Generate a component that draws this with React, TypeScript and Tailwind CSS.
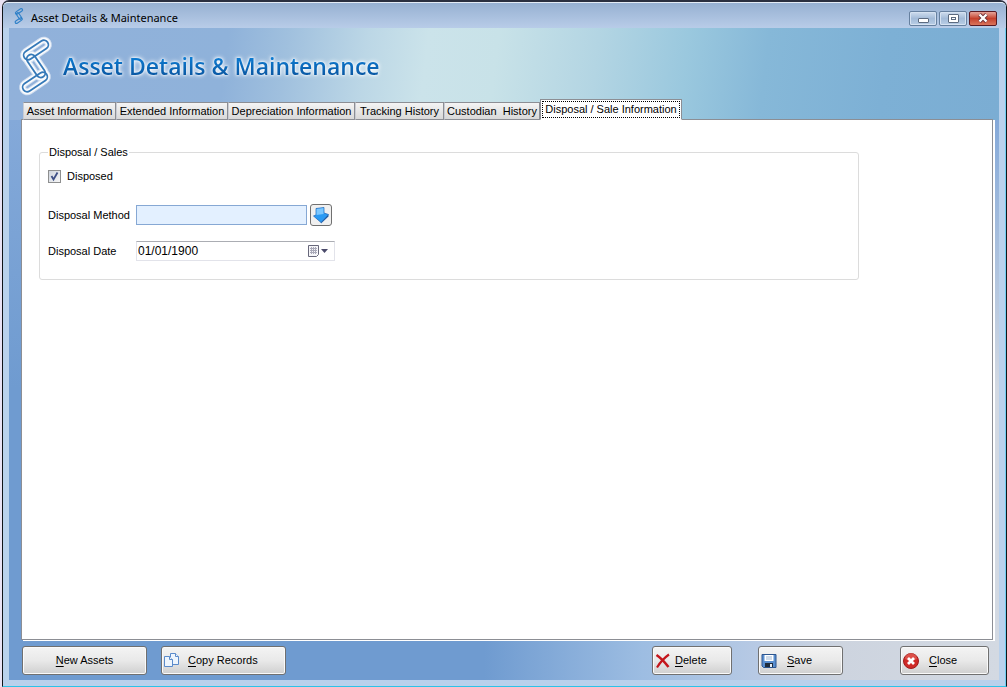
import { useState, type ReactNode } from "react";

const tabs = [
  { label: "Asset Information", width: "w-[93px]" },
  { label: "Extended Information", width: "w-[112px]" },
  { label: "Depreciation Information", width: "w-[127px]" },
  { label: "Tracking History", width: "w-[89px]" },
  { label: "Custodian  History", width: "w-[96px]" },
  { label: "Disposal / Sale Information", width: "w-[142px]" },
];

function ChainMark({ className, halo }: { className: string; halo?: boolean }) {
  const links = (
    <>
      <rect x="-14" y="-4.5" width="28" height="9" rx="4.5" transform="translate(18 12) rotate(-34)" />
      <rect x="-13" y="-4.5" width="26" height="9" rx="4.5" transform="translate(18 28) rotate(56)" />
      <rect x="-14" y="-4.5" width="28" height="9" rx="4.5" transform="translate(17 44) rotate(-34)" />
    </>
  );
  return (
    <svg viewBox="0 0 36 56" className={className} fill="none" overflow="visible" aria-hidden="true">
      {halo && (
        <g stroke="#fff">
          <g strokeWidth="7" opacity=".6">
            {links}
          </g>
          <g strokeWidth="5" opacity=".9">
            {links}
          </g>
        </g>
      )}
      <g stroke={halo ? "#3579b8" : "#2f80c8"} strokeWidth={halo ? 1.8 : 4}>
        {links}
      </g>
    </svg>
  );
}

function CaptionButton({ label, close, children }: { label: string; close?: boolean; children: ReactNode }) {
  return (
    <button
      aria-label={label}
      className={`flex h-[15px] w-7 items-center justify-center rounded-[2px] border ${
        close
          ? "border-[#5b1a22] bg-linear-to-b from-[#e4a39a] via-[#c4402c] via-50% to-[#d9745c]"
          : "border-[#66809f] bg-linear-to-b from-[#cfddee] via-[#a3bbd8] via-50% to-[#b9cee6] inset-shadow-[0_0_0_1px_#d5e2f1]"
      }`}
    >
      {children}
    </button>
  );
}

function ActionButton({
  letter,
  rest,
  className,
  textClass,
  icon,
}: {
  letter: string;
  rest: string;
  className: string;
  textClass: string;
  icon?: ReactNode;
}) {
  return (
    <button
      className={`flex h-[29px] items-center rounded-[3px] border border-[#707070] bg-linear-to-b from-[#f4f4f4] via-[#e9e9e9] via-50% to-[#cfcfcf] inset-shadow-[0_0_0_1px_#fafafa] ${className}`}
    >
      {icon}
      <span className={textClass}>
        <u className="underline-offset-2">{letter}</u>
        {rest}
      </span>
    </button>
  );
}

const CopyIcon = (
  <svg className="h-4 w-4" viewBox="0 0 16 16" fill="#eef5fd" stroke="#5b8bcb" aria-hidden="true">
    <path d="M6.500 .5h5l3 3v8h-8z" />
    <path d="M11.500 .5v3h3" />
    <path d="M.5 3.500h5l3 3v7h-8z" />
    <path d="M5.500 3.500v3h3" />
  </svg>
);

const DeleteIcon = (
  <svg className="h-4 w-4" viewBox="0 0 16 16" fill="none" stroke="#c4161c" aria-hidden="true">
    <path d="M1.500 2C6 5 10 9.500 13.500 14" strokeWidth="2.600" />
    <path d="M14 1.500C9 5 5 9.500 2 14.500" strokeWidth="2.200" />
  </svg>
);

const SaveIcon = (
  <svg className="h-4 w-4" viewBox="0 0 16 16" aria-hidden="true">
    <path d="M1 1.500h14v13H2.500L1 13z" fill="#5a8fd0" stroke="#2c558f" />
    <path d="M3.500 2h9v6h-9z" fill="#fff" />
    <path d="M5 4h6M5 6h6" stroke="#9db5d2" />
    <path d="M4 10h8v4H4z" fill="#1f2c3d" />
    <path d="M9 11h2v3H9z" fill="#e6edf5" />
  </svg>
);

const CloseIcon = (
  <svg className="h-4 w-4" viewBox="0 0 16 16" aria-hidden="true">
    <circle cx="8" cy="8" r="7.500" fill="#cf2a27" stroke="#a01c1c" />
    <path d="M2 6a6 6 0 0 1 12 0Q8 9 2 6" fill="#e66a60" opacity=".6" />
    <path d="m5 5 6 6m0-6-6 6" stroke="#fff" strokeWidth="2.800" />
  </svg>
);

export default function App() {
  const [active, setActive] = useState(5);
  const [disposed, setDisposed] = useState(true);

  return (
    <div className="min-h-screen bg-[#e9e2f4] pl-[2px] font-['Liberation_Sans',Arial,sans-serif] text-[11px] text-black">
      <div className="flex min-h-screen flex-col rounded-t-[7px] border-x border-t-2 border-b border-x-[#101418] border-t-[#2b3040] border-b-[#2cc3e8] bg-[#b9d1ec] inset-shadow-[-1px_0_0_#6fcdf0]">
        <header className="flex h-[26px] items-center gap-1 rounded-t-[5px] border-t border-[#e4ecf6] bg-linear-to-b from-[#97b1d2] to-[#b8cce8] pr-[9px] pl-2">
          <ChainMark className="h-4 w-4" />
          <h1 className="flex-1 pt-1 font-['Noto_Sans','Open_Sans',sans-serif] text-[11px] leading-4">
            Asset Details &amp; Maintenance
          </h1>
          <div className="flex gap-[2px] pt-[5px]">
            <CaptionButton label="Minimize">
              <span className="mt-1 h-[5px] w-[11px] rounded-[1px] border border-[#5c6b80] bg-white" />
            </CaptionButton>
            <CaptionButton label="Restore">
              <span className="flex h-[9px] w-[11px] items-center justify-center rounded-[1px] border border-[#5c6b80] bg-white">
                <span className="h-[3px] w-[5px] border border-[#5c6b80]" />
              </span>
            </CaptionButton>
            <CaptionButton label="Close window" close>
              <svg className="h-[10px] w-3" viewBox="0 0 12 10" fill="none" aria-hidden="true">
                <path d="m2.500 1.500 7 7m0-7-7 7" stroke="#6a3038" strokeWidth="4" />
                <path d="m2.500 1.500 7 7m0-7-7 7" stroke="#fff" strokeWidth="2.400" />
              </svg>
            </CaptionButton>
          </div>
        </header>

        <div className="mr-[7px] mb-[6px] ml-[6px] flex flex-1 flex-col bg-[linear-gradient(to_bottom,#8fb1da_0px,#84a9d9_92px,transparent_360px),linear-gradient(to_right,#6f9bd0_48%,#9dbde2_64%,#b8cae4_76%,#cdd4df_84%,#d3d9e2_100%)]">
          <div className="h-[92px] bg-[linear-gradient(97deg,#91b1da_0%,#8fb2da_22%,#a0c0de_28%,#bcd7e6_36%,#cbe3ea_42%,#c8e2e8_49%,#b3d5e3_59%,#9ac8de_68%,#86b8d8_76%,#7db0d5_88%,#7badd3_100%)]">
            <div className="flex items-center gap-[9px] pt-[10px] pl-[9px]">
              <ChainMark className="h-14 w-9" halo />
              <h2 className="bg-linear-to-b from-[#0d80d8] from-20% to-[#0a559f] to-80% bg-clip-text font-['Open_Sans','Noto_Sans',sans-serif] text-[23px] leading-9 font-semibold text-transparent filter-[drop-shadow(0_0_1px_#fff)_drop-shadow(0_0_2px_#fff)]">
                Asset Details &amp; Maintenance
              </h2>
            </div>
          </div>

          <div className="-mt-[21px] flex flex-1 flex-col pr-[6px] pl-3">
            <div role="tablist" className="z-10 -mb-px flex items-end pl-[2px]">
              {tabs.map((tab, i) => (
                <button
                  key={tab.label}
                  role="tab"
                  aria-selected={i === active}
                  onClick={() => setActive(i)}
                  className={`flex justify-center border whitespace-pre ${tab.width} ${
                    i === active
                      ? "h-[21px] border-[#8c8e94] border-b-white bg-white px-px pt-px"
                      : "h-[18px] items-center border-[#8c8e94] border-l-[#c8ccd4] bg-linear-to-b from-[#f4f4f4] to-[#d9d9d9]"
                  }`}
                >
                  <span
                    className={
                      i === active
                        ? "flex h-[17px] w-full items-center justify-center border border-dotted border-black"
                        : ""
                    }
                  >
                    {tab.label}
                  </span>
                </button>
              ))}
            </div>

            <main className="flex-1 border border-[#8c8e94] bg-white px-[17px] pt-[25px] shadow-[2px_1px_0_#fff]">
              <fieldset className="h-[135px] w-[87.600%] rounded-[3px] border border-[#dcdcdc] pl-2">
                <legend className="px-px leading-[14px]">Disposal / Sales</legend>
                <label className="mt-[9px] flex h-4 items-center gap-[6px]">
                  <span className="relative h-[13px] w-[13px]">
                    <input
                      type="checkbox"
                      checked={disposed}
                      onChange={(e) => setDisposed(e.target.checked)}
                      className="block h-[13px] w-[13px] appearance-none border border-[#8e8f8f] bg-linear-to-br from-[#cfd5de] to-[#f6f6f6]"
                    />
                    {disposed && (
                      <svg
                        className="pointer-events-none absolute inset-0 h-[13px] w-[13px]"
                        viewBox="0 0 13 13"
                        fill="none"
                        aria-hidden="true"
                      >
                        <path d="m3.500 6 2 3.500 4-7" stroke="#3e4f86" strokeWidth="1.800" />
                      </svg>
                    )}
                  </span>
                  Disposed
                </label>
                <div className="mt-5 flex items-center">
                  <label htmlFor="method" className="w-[88px]">
                    Disposal Method
                  </label>
                  <input id="method" className="h-5 w-[171px] border border-[#86a8d4] bg-[#e3f0ff] px-1" />
                  <button
                    aria-label="Choose disposal method"
                    className="ml-[3px] flex h-[22px] w-[22px] items-center justify-center rounded-[3px] border border-[#707070] bg-[#f0f0f0]"
                  >
                    <svg className="h-[18px] w-[18px]" viewBox="0 0 18 18" aria-hidden="true">
                      <path d="M4 2.500 12 1.500V7l4.500 1.500L9 16.500 1.500 10 4 9z" fill="#2a9af3" stroke="#1b62b4" strokeWidth=".7" />
                      <path d="M4.500 3 11.500 2v6L4.500 9z" fill="#7cc7ff" />
                      <path d="M9 16.500 16.500 8.500v2L9 17.500z" fill="#1558a6" />
                    </svg>
                  </button>
                </div>
                <div className="mt-[15px] flex items-center">
                  <label htmlFor="date" className="w-[88px]">
                    Disposal Date
                  </label>
                  <div className="flex h-5 w-[199px] items-center border border-[#e2e3ea] border-t-[#abadb3]">
                    <input id="date" defaultValue="01/01/1900" className="w-[171px] px-px text-[12px] outline-none" />
                    <button aria-label="Open calendar">
                      <svg className="h-3 w-[22px]" viewBox="0 0 22 12" aria-hidden="true">
                        <path d="M.5.500h10v9l-2 2h-8z" fill="#f5f5f8" stroke="#67677a" />
                        <path d="M2 3.500h7M2 5.500h7M2 7.500h7M3.500 2v7M5.500 2v7M7.500 2v7" stroke="#a9a9b8" />
                        <path d="M13 4h7l-3.500 4z" fill="#4a4a6a" />
                      </svg>
                    </button>
                  </div>
                </div>
              </fieldset>
            </main>
          </div>

          <footer className="flex h-10 items-start pt-[6px] pr-[10px] pl-[13px]">
            <ActionButton letter="N" rest="ew Assets" className="w-[125px] justify-center" textClass="" />
            <ActionButton letter="C" rest="opy Records" className="ml-[14px] w-[125px] pl-[2px]" textClass="ml-2" icon={CopyIcon} />
            <ActionButton letter="D" rest="elete" className="ml-auto w-20 pl-[2px]" textClass="ml-1" icon={DeleteIcon} />
            <ActionButton letter="S" rest="ave" className="ml-[26px] w-[85px] pl-[2px]" textClass="ml-[10px]" icon={SaveIcon} />
            <ActionButton letter="C" rest="lose" className="ml-[57px] w-[89px] pl-[2px]" textClass="ml-[10px]" icon={CloseIcon} />
          </footer>
        </div>
      </div>
    </div>
  );
}
